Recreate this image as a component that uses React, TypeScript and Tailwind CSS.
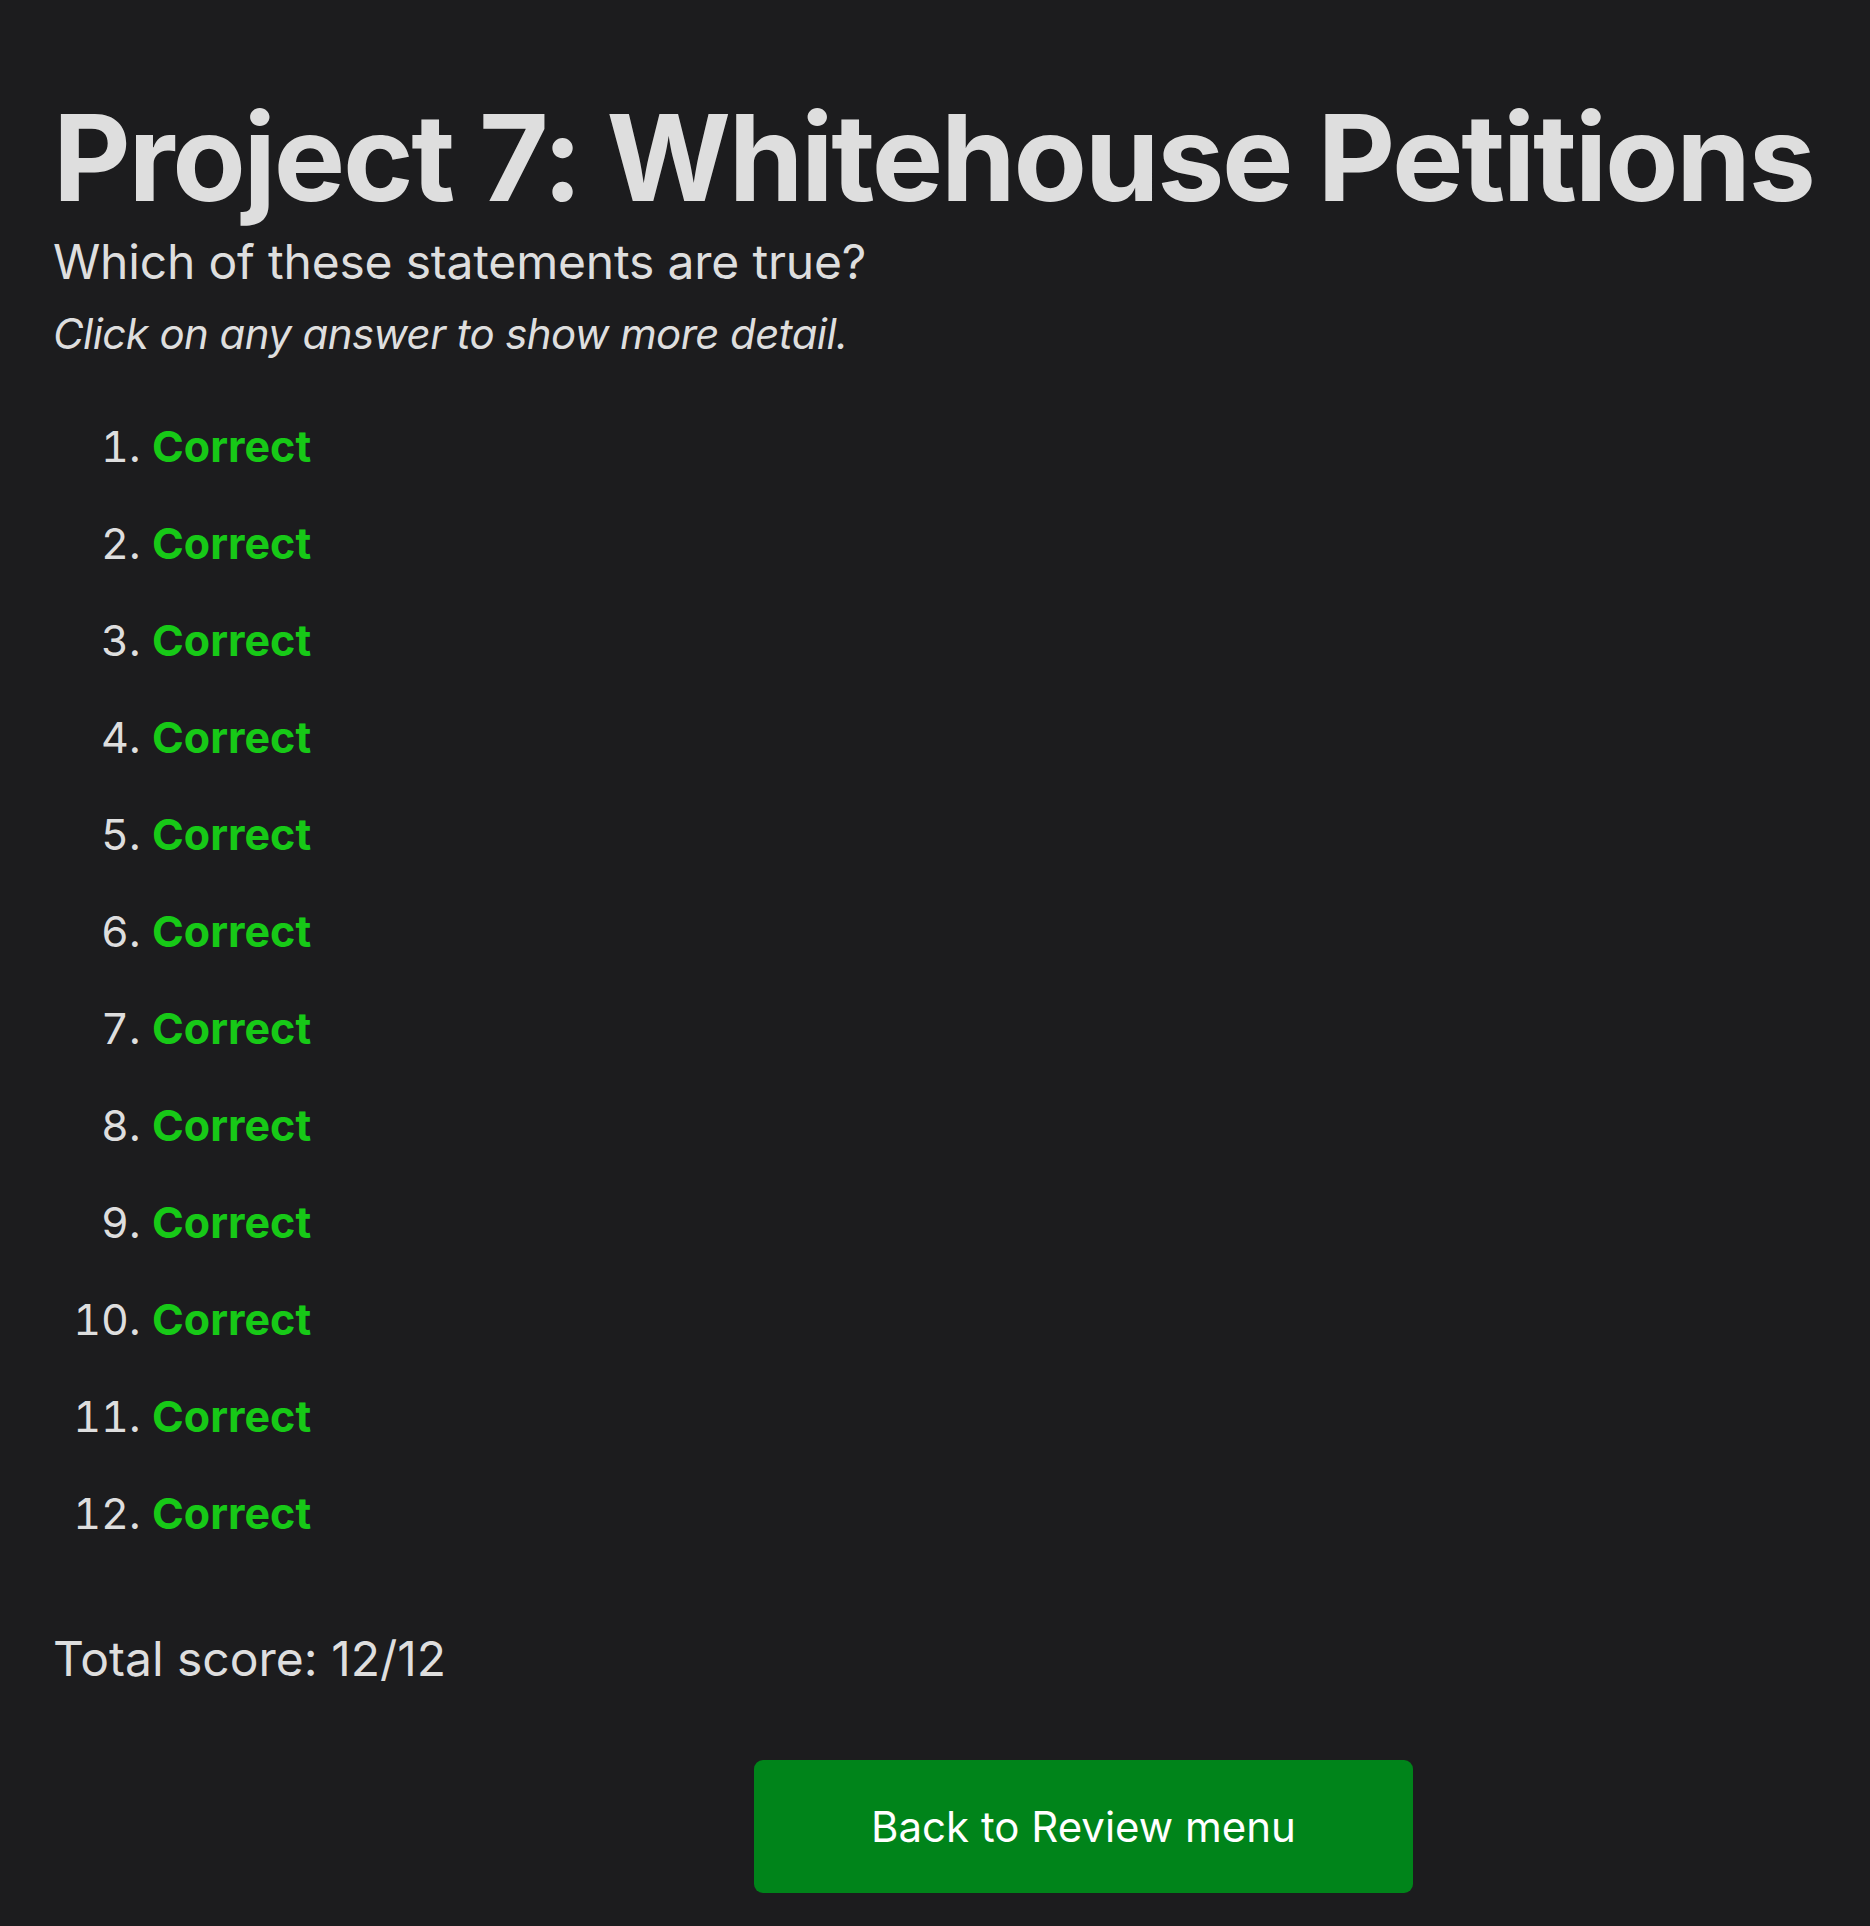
import React from "react";

const answers = Array.from({ length: 12 }, (_, i) => i + 1);

export default function App() {
    return (
        <div className="min-h-[1926px] bg-[#1c1c1e] text-[#dedede] font-['Inter',sans-serif]">
            <div className="pl-[53px] pt-[98px] pb-[32px]">
                <h1 className="text-[120px] leading-[120px] font-bold tracking-[-0.019em]">
                    Project 7: Whitehouse Petitions
                </h1>
                <p className="mt-[15px] text-[48px] leading-[58px] tracking-[-0.004em]">
                    Which of these statements are true?
                </p>
                <p className="mt-[18px] text-[42px] leading-[50px] italic tracking-[-0.014em]">
                    Click on any answer to show more detail.
                </p>

                <ol className="mt-[39px] list-decimal pl-[99px] text-[43px] leading-[97px] marker:text-[#dedede]">
                    {answers.map((n) => (
                        <li key={n} className="pl-0">
                            <button className="font-bold text-[#17c917]">
                                Correct
                            </button>
                        </li>
                    ))}
                </ol>

                <p className="mt-[68px] text-[48px] leading-[58px]">
                    Total score: 12/12
                </p>

                <div className="mt-[72px] pl-[701px]">
                    <button className="w-[659px] h-[133px] rounded-[9px] bg-[#00841a] text-white text-[42px]">
                        Back to Review menu
                    </button>
                </div>
            </div>
        </div>
    );
}
